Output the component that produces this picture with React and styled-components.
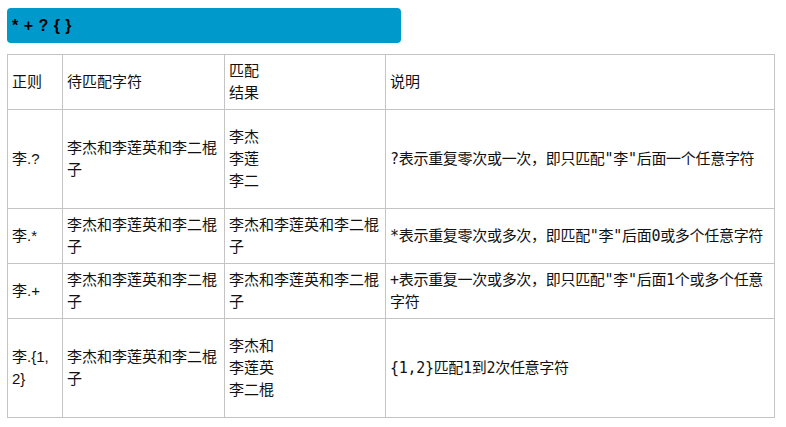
import React from "react";
import styled, { createGlobalStyle } from "styled-components";

const rows = [
  {
    pattern: "李.?",
    source: "李杰和李莲英和李二棍子",
    result: ["李杰", "李莲", "李二"],
    note: "?表示重复零次或一次，即只匹配\"李\"后面一个任意字符",
  },
  {
    pattern: "李.*",
    source: "李杰和李莲英和李二棍子",
    result: ["李杰和李莲英和李二棍子"],
    note: "*表示重复零次或多次，即匹配\"李\"后面0或多个任意字符",
  },
  {
    pattern: "李.+",
    source: "李杰和李莲英和李二棍子",
    result: ["李杰和李莲英和李二棍子"],
    note: "+表示重复一次或多次，即只匹配\"李\"后面1个或多个任意字符",
  },
  {
    pattern: "李.{1, 2}",
    source: "李杰和李莲英和李二棍子",
    result: ["李杰和", "李莲英", "李二棍"],
    note: "{1,2}匹配1到2次任意字符",
  },
];

const App = () => {
  return (
    <>
      <GlobalStyle />
      <Page>
        <Banner>* + ? {"{ }"}</Banner>
        <Table>
          <colgroup>
            <col style={{ width: 55 }} />
            <col style={{ width: 162 }} />
            <col style={{ width: 161 }} />
            <col />
          </colgroup>
          <tbody>
            <tr>
              <Cell>正则</Cell>
              <Cell>待匹配字符</Cell>
              <Cell>
                匹配
                <br />
                结果
              </Cell>
              <Cell>说明</Cell>
            </tr>
            {rows.map((row, index) => (
              <tr key={index}>
                <Cell>{row.pattern}</Cell>
                <Cell>{row.source}</Cell>
                <Cell>
                  <Lines $tall={row.result.length > 1}>
                    {row.result.map((line) => (
                      <div key={line}>{line}</div>
                    ))}
                  </Lines>
                </Cell>
                <Cell $note>{row.note}</Cell>
              </tr>
            ))}
          </tbody>
        </Table>
      </Page>
    </>
  );
};

export default App;

const GlobalStyle = createGlobalStyle`
  body {
    margin: 0;
    background: #ffffff;
    color: #111111;
    font-family: "Liberation Sans", "Noto Sans CJK SC", sans-serif;
  }
`;

const Page = styled.div`
  padding: 8px 11px 0 7px;
  display: flex;
  flex-direction: column;
  gap: 11px;
`;

const Banner = styled.div`
  width: 394px;
  height: 35px;
  box-sizing: border-box;
  background: #0099cc;
  border-radius: 4px;
  padding: 0 5px 0 5px;
  display: flex;
  align-items: center;
  font-weight: bold;
  font-size: 16px;
  word-spacing: 1px;
  color: #000000;
`;

const Table = styled.table`
  width: 768px;
  border-collapse: collapse;
  table-layout: fixed;
`;

const Cell = styled.td`
  border: 1px solid #c4c4c4;
  padding: 5px 4px;
  vertical-align: middle;
  font-size: 15px;
  line-height: 22px;
  font-family: ${(p) =>
    p.$note
      ? `"DejaVu Sans Mono", "Noto Sans CJK SC", monospace`
      : `"Liberation Sans", "Noto Sans CJK SC", sans-serif`};
  letter-spacing: ${(p) => (p.$note ? "-0.3px" : "0")};
  word-break: break-all;
  color: #111111;
`;

const Lines = styled.div`
  padding: ${(p) => (p.$tall ? "11px 0" : "0")};
`;
